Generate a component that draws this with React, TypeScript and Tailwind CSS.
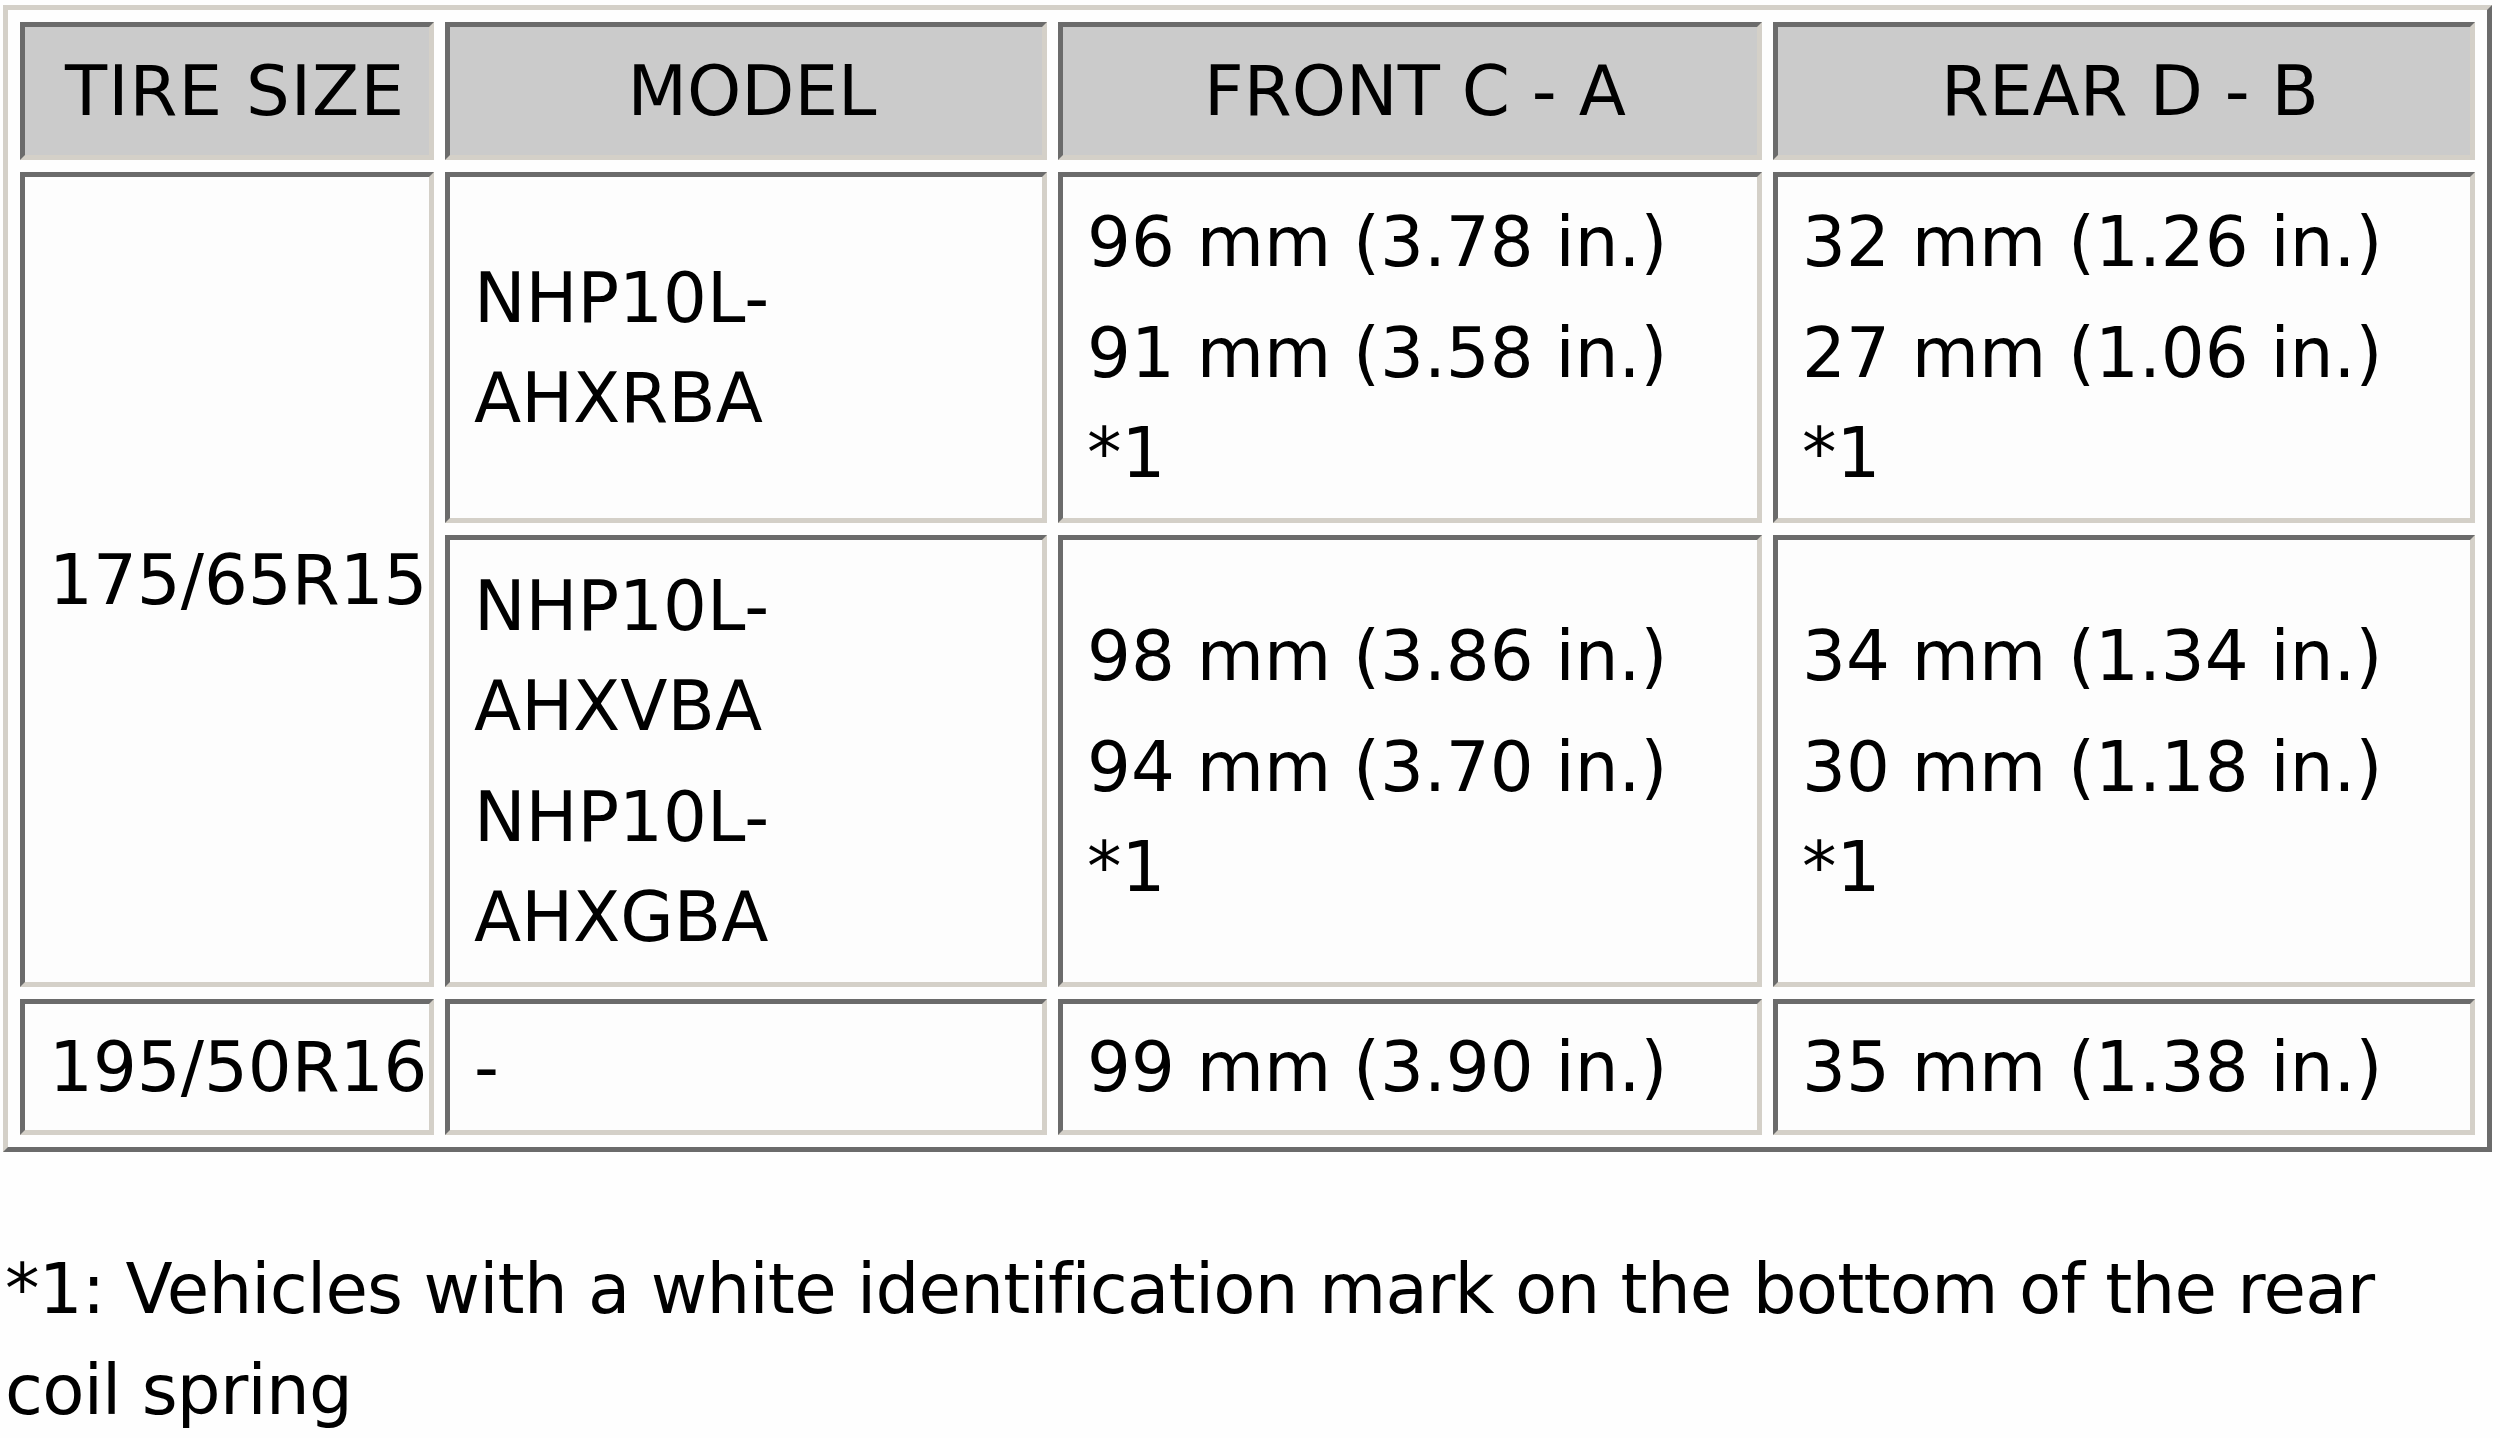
import React from "react";

const head =
  "bg-[#cbcbcb] border-[5px] border-t-[#6b6b6b] border-l-[#6b6b6b] border-r-[#d4d0c8] border-b-[#d4d0c8] flex items-center justify-center";
const cell =
  "bg-[#fdfdfd] border-[5px] border-t-[#6b6b6b] border-l-[#6b6b6b] border-r-[#d4d0c8] border-b-[#d4d0c8] flex flex-col justify-center gap-[11px] pl-[24px]";

export default function App() {
  return (
    <div className="min-h-screen bg-[#fefefe] text-black font-['DejaVu_Sans','Verdana',sans-serif] pl-[3px] pt-[5px]">
      <div className="inline-block border-[5px] border-t-[#d4d0c8] border-l-[#d4d0c8] border-r-[#6b6b6b] border-b-[#6b6b6b] p-[12px]">
        <div className="grid grid-cols-[414px_602px_704px_702px] grid-rows-[138px_351px_452px_136px] gap-x-[11px] gap-y-[12px] text-[69px] leading-[100px]">
          <div className={`${head} tracking-[1px] pl-[16px]`}>TIRE SIZE</div>
          <div className={`${head} pl-[12px]`}>MODEL</div>
          <div className={`${head} pl-[10px]`}>FRONT C - A</div>
          <div className={`${head} pl-[12px]`}>REAR D - B</div>

          <div className={`${cell} row-span-2 pl-[21px]`}>
            <div>175/65R15</div>
          </div>
          <div className={cell}>
            <div>
              NHP10L-
              <br />
              AHXRBA
            </div>
          </div>
          <div className={cell}>
            <div>96 mm (3.78 in.)</div>
            <div>
              91 mm (3.58 in.)
              <br />
              *1
            </div>
          </div>
          <div className={cell}>
            <div>32 mm (1.26 in.)</div>
            <div>
              27 mm (1.06 in.)
              <br />
              *1
            </div>
          </div>

          <div className={cell}>
            <div>
              NHP10L-
              <br />
              AHXVBA
            </div>
            <div>
              NHP10L-
              <br />
              AHXGBA
            </div>
          </div>
          <div className={cell}>
            <div>98 mm (3.86 in.)</div>
            <div>
              94 mm (3.70 in.)
              <br />
              *1
            </div>
          </div>
          <div className={cell}>
            <div>34 mm (1.34 in.)</div>
            <div>
              30 mm (1.18 in.)
              <br />
              *1
            </div>
          </div>

          <div className={`${cell} pl-[21px]`}>
            <div>195/50R16</div>
          </div>
          <div className={cell}>
            <div>-</div>
          </div>
          <div className={cell}>
            <div>99 mm (3.90 in.)</div>
          </div>
          <div className={cell}>
            <div>35 mm (1.38 in.)</div>
          </div>
        </div>
      </div>
      <p className="mt-[87px] pl-[2px] text-[69px] leading-[101px] tracking-[-0.75px] [font-variant-ligatures:none]">
        *1: Vehicles with a white identification mark on the bottom of the rear
        <br />
        coil spring
      </p>
    </div>
  );
}
